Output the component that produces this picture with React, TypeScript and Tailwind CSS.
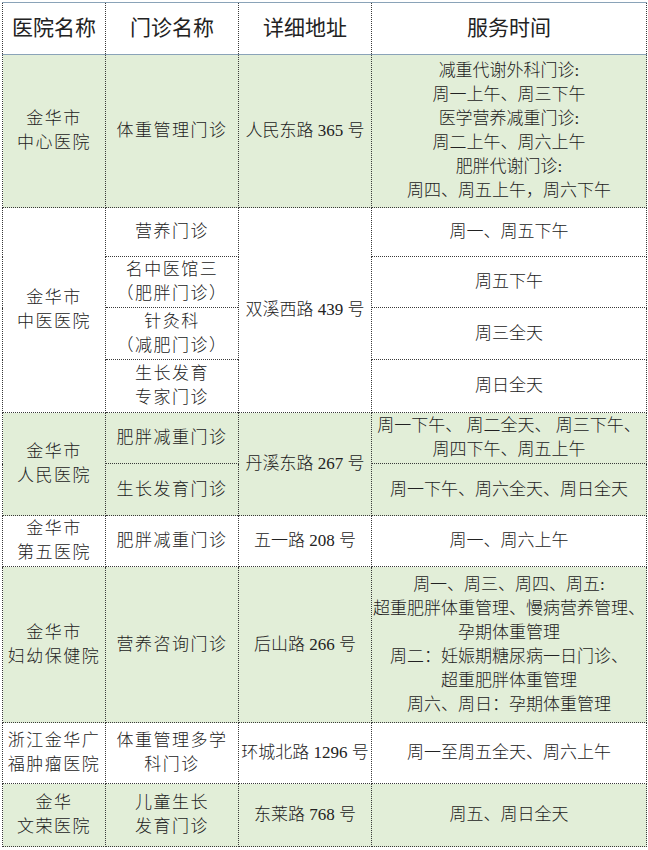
const green = "bg-[#e2eed8]";
const cell =
  "border border-dotted border-[#3a3a3a] text-center align-middle p-0 leading-[24px]";
const hdr =
  "border-x border-dotted border-x-[#3a3a3a] border-y border-y-[#8aa3b8] border-y-solid text-center align-middle p-0 text-[21px] font-normal";

function Lines({ t, spaced }: { t: string[]; spaced?: boolean }) {
  return (
    <>
      {t.map((s, i) => (
        <div key={i} className={spaced ? "tracking-[1.5px]" : ""}>
          {s}
        </div>
      ))}
    </>
  );
}

export default function App() {
  return (
    <div
      className="w-[648px] h-[850px] bg-white pt-[2px] pl-[2px] text-[#222] text-[17px]"
      style={{ fontFamily: '"Liberation Serif", "Noto Sans CJK SC", serif' }}
    >
      <table className="w-[644px] table-fixed border-collapse">
        <colgroup>
          <col className="w-[103px]" />
          <col className="w-[133px]" />
          <col className="w-[133px]" />
          <col className="w-[275px]" />
        </colgroup>
        <thead>
          <tr className="h-[52px] bg-white">
            <th className={hdr} style={{ borderTopStyle: "solid", borderBottomStyle: "solid" }}>
              医院名称
            </th>
            <th className={hdr} style={{ borderTopStyle: "solid", borderBottomStyle: "solid" }}>
              门诊名称
            </th>
            <th className={hdr} style={{ borderTopStyle: "solid", borderBottomStyle: "solid" }}>
              详细地址
            </th>
            <th className={hdr} style={{ borderTopStyle: "solid", borderBottomStyle: "solid" }}>
              服务时间
            </th>
          </tr>
        </thead>
        <tbody className="font-light">
          <tr className={`h-[153px] ${green}`}>
            <td className={cell}>
              <Lines t={["金华市", "中心医院"]} spaced />
            </td>
            <td className={`${cell} tracking-[1.5px]`}>体重管理门诊</td>
            <td className={cell}>人民东路 365 号</td>
            <td className={cell}>
              <Lines
                t={[
                  "减重代谢外科门诊:",
                  "周一上午、周三下午",
                  "医学营养减重门诊:",
                  "周二上午、周六上午",
                  "肥胖代谢门诊:",
                  "周四、周五上午，周六下午",
                ]}
              />
            </td>
          </tr>

          <tr className="h-[49px] bg-white">
            <td className={cell} rowSpan={4}>
              <Lines t={["金华市", "中医医院"]} spaced />
            </td>
            <td className={`${cell} tracking-[1.5px]`}>营养门诊</td>
            <td className={cell} rowSpan={4}>
              双溪西路 439 号
            </td>
            <td className={cell}>周一、周五下午</td>
          </tr>
          <tr className="h-[51px] bg-white">
            <td className={cell}>
              <Lines t={["名中医馆三", "（肥胖门诊）"]} spaced />
            </td>
            <td className={cell}>周五下午</td>
          </tr>
          <tr className="h-[52px] bg-white">
            <td className={cell}>
              <Lines t={["针灸科", "（减肥门诊）"]} spaced />
            </td>
            <td className={cell}>周三全天</td>
          </tr>
          <tr className="h-[53px] bg-white">
            <td className={cell}>
              <Lines t={["生长发育", "专家门诊"]} spaced />
            </td>
            <td className={cell}>周日全天</td>
          </tr>

          <tr className={`h-[51px] ${green}`}>
            <td className={cell} rowSpan={2}>
              <Lines t={["金华市", "人民医院"]} spaced />
            </td>
            <td className={`${cell} tracking-[1.5px]`}>肥胖减重门诊</td>
            <td className={cell} rowSpan={2}>
              丹溪东路 267 号
            </td>
            <td className={cell}>
              <Lines t={["周一下午、 周二全天、 周三下午、", "周四下午、周五上午"]} />
            </td>
          </tr>
          <tr className={`h-[52px] ${green}`}>
            <td className={`${cell} tracking-[1.5px]`}>生长发育门诊</td>
            <td className={cell}>周一下午、周六全天、周日全天</td>
          </tr>

          <tr className="h-[51px] bg-white">
            <td className={cell}>
              <Lines t={["金华市", "第五医院"]} spaced />
            </td>
            <td className={`${cell} tracking-[1.5px]`}>肥胖减重门诊</td>
            <td className={cell}>五一路 208 号</td>
            <td className={cell}>周一、周六上午</td>
          </tr>

          <tr className={`h-[156px] ${green}`}>
            <td className={cell}>
              <Lines t={["金华市", "妇幼保健院"]} spaced />
            </td>
            <td className={`${cell} tracking-[1.5px]`}>营养咨询门诊</td>
            <td className={cell}>后山路 266 号</td>
            <td className={cell}>
              <Lines
                t={[
                  "周一、周三、周四、周五:",
                  "超重肥胖体重管理、慢病营养管理、",
                  "孕期体重管理",
                  "周二：妊娠期糖尿病一日门诊、",
                  "超重肥胖体重管理",
                  "周六、周日：孕期体重管理",
                ]}
              />
            </td>
          </tr>

          <tr className="h-[61px] bg-white">
            <td className={cell}>
              <Lines t={["浙江金华广", "福肿瘤医院"]} spaced />
            </td>
            <td className={cell}>
              <Lines t={["体重管理多学", "科门诊"]} spaced />
            </td>
            <td className={cell}>环城北路 1296 号</td>
            <td className={cell}>周一至周五全天、周六上午</td>
          </tr>

          <tr className={`h-[63px] ${green}`}>
            <td className={cell}>
              <Lines t={["金华", "文荣医院"]} spaced />
            </td>
            <td className={cell}>
              <Lines t={["儿童生长", "发育门诊"]} spaced />
            </td>
            <td className={cell}>东莱路 768 号</td>
            <td className={cell}>周五、周日全天</td>
          </tr>
        </tbody>
      </table>
    </div>
  );
}
